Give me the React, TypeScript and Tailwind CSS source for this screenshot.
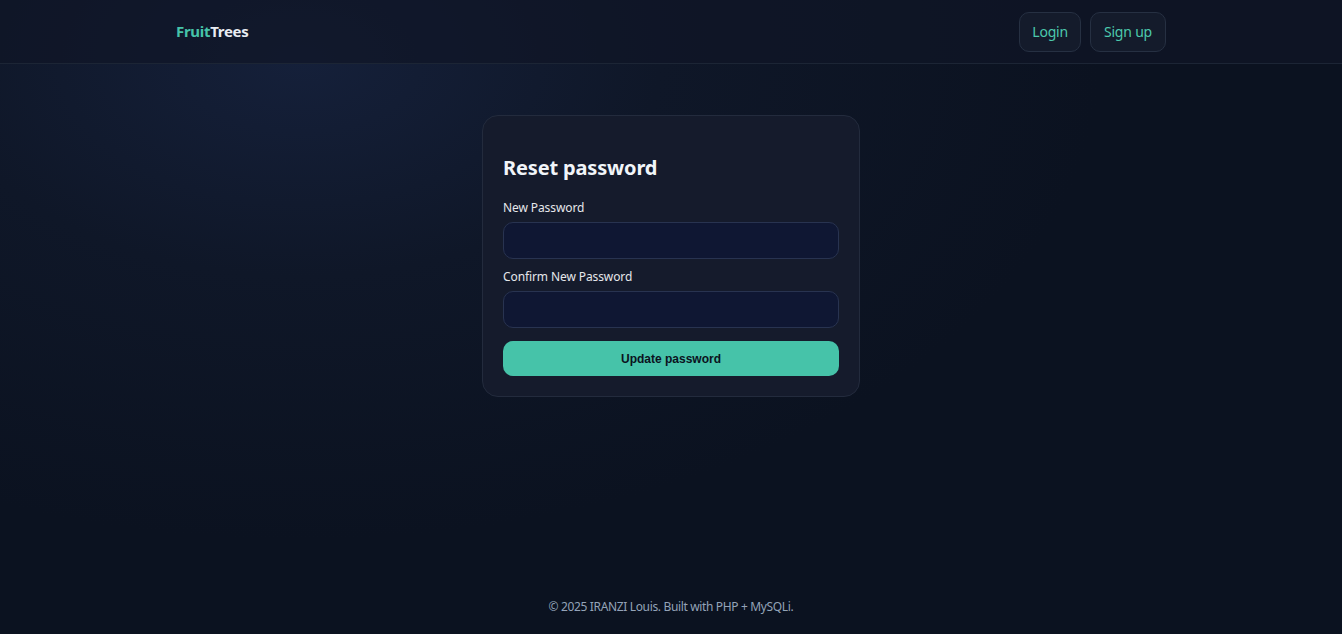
import React from "react";

export default function App() {
  return (
    <div
      className="min-h-[634px] flex flex-col text-[#e5e7eb] bg-[#0b1220] bg-[radial-gradient(ellipse_800px_480px_at_300px_60px,#15203a_0%,#0f1728_45%,#0b1220_100%)]"
      style={{ fontFamily: '"Segoe UI", "Noto Sans", sans-serif' }}
    >
      <header className="h-[64px] border-b border-[#1c2535] bg-[#0f1626]/70">
        <div className="w-[990px] mx-auto h-full flex items-center justify-between">
          <div className="text-[15px] font-bold tracking-[-0.3px]">
            <span className="text-[#46c3a9]">Fruit</span>
            <span className="text-[#e8ecf2]">Trees</span>
          </div>
          <nav className="flex items-center gap-[9px]">
            <a className="h-[40px] px-[12px] flex items-center rounded-[10px] border border-[#263042] bg-[#141b2b] text-[#4cc9ad] text-[14px] tracking-[-0.2px]">
              Login
            </a>
            <a className="h-[40px] px-[13px] flex items-center rounded-[10px] border border-[#263042] bg-[#141b2b] text-[#4cc9ad] text-[14px] tracking-[-0.2px]">
              Sign up
            </a>
          </nav>
        </div>
      </header>

      <main className="flex-1 flex justify-center pt-[51px]">
        <div className="w-[378px] h-fit rounded-[16px] border border-[#232b3d] bg-[#151b2c] px-[20px] pt-[37px] pb-[20px]">
          <h1 className="text-[20px] font-bold leading-[30px] tracking-[-0.15px] text-[#f1f5f9] mb-[16px]">
            Reset password
          </h1>
          <form className="flex flex-col">
            <label className="text-[12px] leading-[18px] tracking-[-0.1px] text-[#e5e7eb] mb-[5px]">New Password</label>
            <input
              type="password"
              className="h-[37px] rounded-[10px] border border-[#283350] bg-[#0f1733] outline-none px-3 mb-[9px]"
            />
            <label className="text-[12px] leading-[18px] tracking-[-0.1px] text-[#e5e7eb] mb-[5px]">Confirm New Password</label>
            <input
              type="password"
              className="h-[37px] rounded-[10px] border border-[#283350] bg-[#0f1733] outline-none px-3 mb-[13px]"
            />
            <button
              type="button"
              className="h-[35px] rounded-[10px] bg-[#46c3a9] text-[#0b1220] text-[12px] font-bold"
              style={{ fontFamily: '"Liberation Sans", Arial, sans-serif' }}
            >
              Update password
            </button>
          </form>
        </div>
      </main>

      <footer className="h-[54px] flex items-center justify-center text-[12px] tracking-[-0.35px] text-[#94a3b8]">
        © 2025 IRANZI Louis. Built with PHP + MySQLi.
      </footer>
    </div>
  );
}
